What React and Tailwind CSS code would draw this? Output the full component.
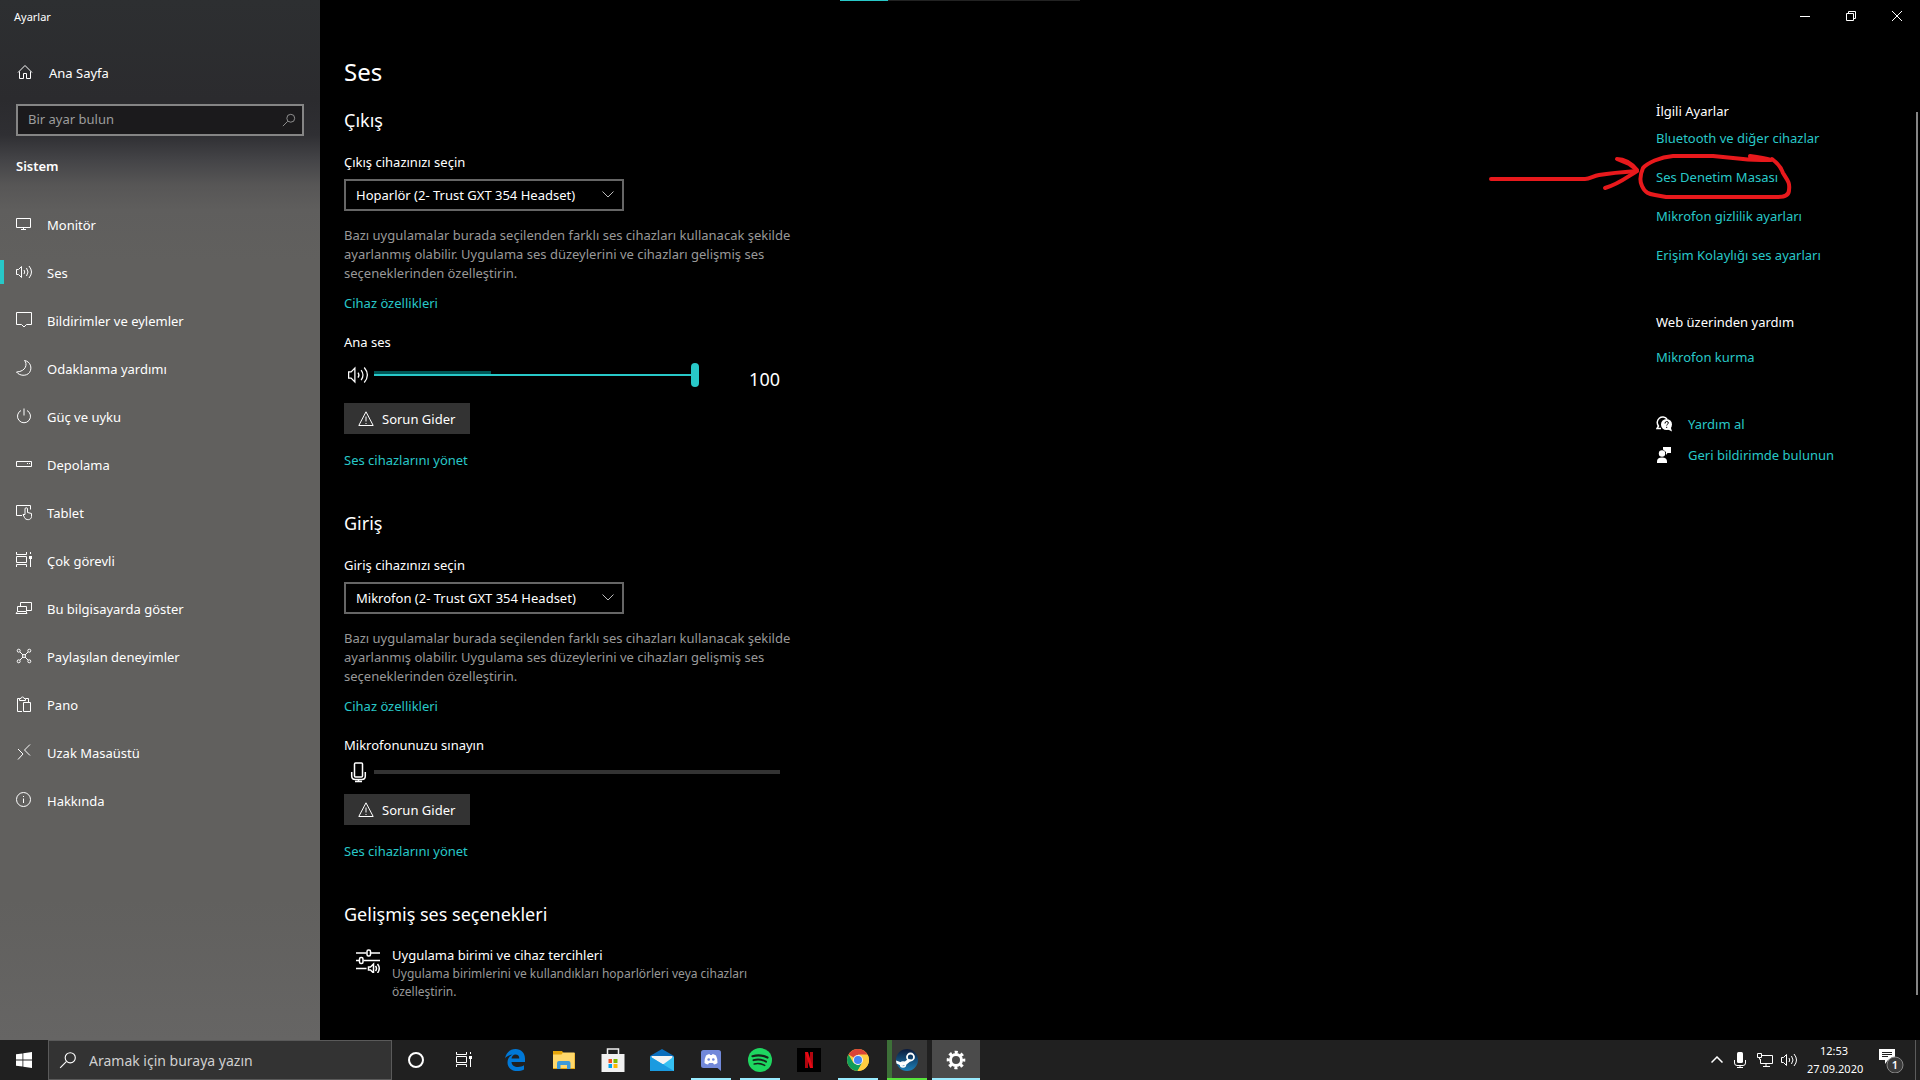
import React, { useState } from "react";

const NAV_ITEMS = [
  { id: "monitor", label: "Monitör" },
  { id: "sound", label: "Ses" },
  { id: "notifications", label: "Bildirimler ve eylemler" },
  { id: "focus", label: "Odaklanma yardımı" },
  { id: "power", label: "Güç ve uyku" },
  { id: "storage", label: "Depolama" },
  { id: "tablet", label: "Tablet" },
  { id: "multitask", label: "Çok görevli" },
  { id: "project", label: "Bu bilgisayarda göster" },
  { id: "shared", label: "Paylaşılan deneyimler" },
  { id: "clipboard", label: "Pano" },
  { id: "remote", label: "Uzak Masaüstü" },
  { id: "about", label: "Hakkında" },
];

// 16x16 line icons
const ICONS = {
  home: <path d="M1 8.5 8 1.5l7 7M2.5 7.5v7h4v-5h3v5h4v-7" />,
  monitor: <path d="M.5 2.5h14v9H.5zM7.5 11.5v2M5 13.500h5" />,
  sound: (
    <path d="M.5 5.5h2l3-3v11l-3-3h-2zM8 6q1.500 2 0 4M10.500 4q3 4 0 8M13 2q5 6 0 12" />
  ),
  notifications: <path d="M.5 .5h15v12h-5L8 15l-2.500-2.500h-5z" />,
  focus: (
    <path d="M8.500 .5c3 3 2 11-8 11.500 3 4 10 4.500 13 .5 3-4.500 1-11-5-12z" />
  ),
  power: <path d="M8 .5v7M5 2.500a6.500 6.500 0 1 0 6 0" />,
  storage: <path d="M.5 5.500h15v5H.5zM11 7.500h1M13 7.500h1" />,
  tablet: (
    <path d="M6 11.500H.5v-10h14v4M9 10.500V5a1 1 0 0 1 2.500 0v3.500l4 1v3c0 4-6 4-7 1l-1.500-3z" />
  ),
  multitask: (
    <>
      <path d="M.5 0v2.500h10V0M.5 4.500h10v6H.5zM.5 15v-2.500h10V15M14.500 0v2M14.500 7v8" />
      <path d="M13 4h3v3h-3z" fill="currentColor" stroke="none" />
    </>
  ),
  project: <path d="M4.500 6V2.500h11v8h-5M1.500 11.500v-5h9v5M0 13.500h11l-1-2H1.500z" />,
  shared: (
    <>
      <path d="m4 4 3 3M12 4 9 7M4 12l3-3M12 12 9 9" />
      <circle cx="2.700" cy="2.700" r="1.500" />
      <circle cx="13.300" cy="2.700" r="1.500" />
      <circle cx="2.700" cy="13.300" r="1.500" />
      <circle cx="13.300" cy="13.300" r="1.500" />
      <circle cx="8" cy="8" r="1.500" />
    </>
  ),
  clipboard: (
    <path d="M6 15.500H1.500v-13h2M10 2.500h2.500V6M3.500 2.500v2h6v-2H8a1.500 1.500 0 0 0-3 0zM7.500 6.500h7v9h-7z" />
  ),
  remote: <path d="m2 5 5 5-5 5.500M14 .5 8.500 6l5.500 5.500" />,
  about: (
    <>
      <circle cx="7.500" cy="7.500" r="7" />
      <path d="M7.500 6.500V11M7.500 4v1" />
    </>
  ),
  search: (
    <>
      <circle cx="10" cy="6" r="4.500" />
      <path d="M6.500 9.500 1 15" />
    </>
  ),
  warning: <path d="M8 .8 15.200 14.500H.8zM8 5.500v5M8 12v1" />,
};

function Icon({ name, size = 16, className = "" }) {
  return (
    <svg
      width={size}
      height={size}
      viewBox="0 0 16 16"
      fill="none"
      stroke="currentColor"
      strokeWidth="1"
      aria-hidden="true"
      className={`shrink-0 overflow-visible ${className}`}
    >
      {ICONS[name]}
    </svg>
  );
}

function Link({ children, className = "" }) {
  return (
    <a
      href="#"
      className={`block w-fit text-[13px] leading-5 text-[#28c8c8] hover:text-gray-400 ${className}`}
    >
      {children}
    </a>
  );
}

function Sidebar({ active, onSelect }) {
  return (
    <aside className="flex w-80 shrink-0 flex-col bg-linear-[180deg,#2d2f31_0px,#2b2b2e_100px,#2f2f33_135px,#444447_160px,#575656_185px,#5f5e5d_210px,#61605e_260px,#61605e_900px,#666564_1040px]">
      <div className="flex h-8 items-center px-3.5 pt-0.5 text-[11px]">Ayarlar</div>
      <a href="#" className="mt-4 flex h-12 items-center gap-4 px-[17px] text-[13px]">
        <Icon name="home" />
        <span className="pt-1">Ana Sayfa</span>
      </a>
      <label className="mx-4 mt-2 flex h-8 items-center border-2 border-[#858585] bg-[#1b1a1c] pr-1.5 pl-2.5 text-[#9d9d9d]">
        <input
          type="text"
          aria-label="Bir ayar bulun"
          placeholder="Bir ayar bulun"
          className="h-full min-w-0 flex-1 bg-transparent pb-0.5 text-[13px] leading-5 outline-none placeholder:text-[#9d9d9d]"
        />
        <Icon name="search" size={14} />
      </label>
      <h2 className="mt-5 px-4 text-[13px] leading-5 font-semibold">Sistem</h2>
      <nav className="mt-6">
        {NAV_ITEMS.map((item) => (
          <button
            key={item.id}
            type="button"
            onClick={() => onSelect(item.id)}
            className="flex h-12 w-full items-center text-left text-[13px] hover:bg-white/10"
          >
            <span
              className={
                item.id === active ? "h-6 w-1 bg-[#28c8c8]" : "h-6 w-1"
              }
            />
            <Icon name={item.id} className="mr-[15px] ml-3" />
            <span className="pt-1">{item.label}</span>
          </button>
        ))}
      </nav>
    </aside>
  );
}

function DeviceSelect({ id, label, device }) {
  return (
    <>
      <label htmlFor={id} className="mt-[18px] block text-[13px] leading-5">
        {label}
      </label>
      <div className="relative mt-[7px] w-[280px]">
        <select
          id={id}
          className="h-8 w-full appearance-none border-2 border-[#666666] bg-black pt-0.5 pr-9 pl-2.5 text-[13px] text-white outline-none"
        >
          <option>{device}</option>
        </select>
        <svg
          width="12"
          height="7"
          viewBox="0 0 12 7"
          fill="none"
          stroke="#bbbbbb"
          className="pointer-events-none absolute top-3 right-2.5"
        >
          <path d="m.5.5 5.500 5.500L11.500.5" />
        </svg>
      </div>
      <p className="mt-[15px] text-[13px] leading-[19px] text-[#999999]">
        Bazı uygulamalar burada seçilenden farklı ses cihazları kullanacak
        şekilde ayarlanmış olabilir. Uygulama ses düzeylerini ve cihazları
        gelişmiş ses seçeneklerinden özelleştirin.
      </p>
      <Link className="mt-2.5">Cihaz özellikleri</Link>
    </>
  );
}

function Troubleshoot({ className = "" }) {
  return (
    <>
      <button
        type="button"
        className={`flex h-[31px] w-[126px] items-center bg-[#333333] pl-3.5 text-[13px] whitespace-nowrap hover:bg-[#444444] ${className}`}
      >
        <Icon name="warning" className="mr-2" />
        <span className="pt-0.5">Sorun Gider</span>
      </button>
      <Link className="mt-4">Ses cihazlarını yönet</Link>
    </>
  );
}

function Volume() {
  const [volume, setVolume] = useState(100);

  return (
    <>
      <label htmlFor="volume" className="mt-[19px] block text-[13px] leading-5">
        Ana ses
      </label>
      <div className="mt-[11px] flex h-7">
        <div className="flex h-6 w-[30px] items-center pl-1">
          <Icon name="sound" size={20} />
        </div>
        <div className="relative h-6 w-[325px]">
          <div className="absolute top-2 left-0 h-[3px] w-[117px] bg-[#005555]" />
          <input
            id="volume"
            type="range"
            min="0"
            max="100"
            value={volume}
            onChange={(e) => setVolume(Number(e.target.value))}
            className="relative block h-6 w-full appearance-none bg-transparent [&::-webkit-slider-runnable-track]:h-0.5 [&::-webkit-slider-runnable-track]:bg-[#28c8c8] [&::-webkit-slider-thumb]:-mt-[11px] [&::-webkit-slider-thumb]:h-6 [&::-webkit-slider-thumb]:w-2 [&::-webkit-slider-thumb]:appearance-none [&::-webkit-slider-thumb]:rounded-full [&::-webkit-slider-thumb]:bg-[#28c8c8]"
          />
        </div>
        <output
          htmlFor="volume"
          className="flex-1 self-end pr-6 text-right text-lg leading-6"
        >
          {volume}
        </output>
      </div>
    </>
  );
}

function SoundPage() {
  return (
    <main className="w-[460px] pb-6">
      <h1 className="text-2xl leading-9">Ses</h1>

      <section>
        <h2 className="mt-4 text-lg leading-7">Çıkış</h2>
        <DeviceSelect
          id="output-device"
          label="Çıkış cihazınızı seçin"
          device="Hoparlör (2- Trust GXT 354 Headset)"
        />
        <Volume />
        <Troubleshoot className="mt-3" />
      </section>

      <section>
        <h2 className="mt-[39px] text-lg leading-7">Giriş</h2>
        <DeviceSelect
          id="input-device"
          label="Giriş cihazınızı seçin"
          device="Mikrofon (2- Trust GXT 354 Headset)"
        />
        <h3 className="mt-[19px] text-[13px] leading-5">Mikrofonunuzu sınayın</h3>
        <div className="mt-[5px] flex h-6 items-center">
          <svg
            width="30"
            height="24"
            viewBox="0 0 30 24"
            fill="none"
            stroke="currentColor"
            strokeWidth="1.500"
          >
            <rect x="10.500" y="3" width="8" height="14" rx="1" />
            <path d="M7.700 12v4q0 3.500 3.500 3.500h6.600q3.500 0 3.500-3.500v-4M14.500 19.500v2.500M11 21.500h7" />
          </svg>
          <div className="mr-6 h-1 flex-1 bg-[#333333]" />
        </div>
        <Troubleshoot className="mt-2.5" />
      </section>

      <section>
        <h2 className="mt-[39px] text-lg leading-7">Gelişmiş ses seçenekleri</h2>
        <button type="button" className="mt-[18px] flex text-left">
          <svg
            width="24"
            height="24"
            viewBox="0 0 24 24"
            fill="none"
            stroke="currentColor"
            strokeWidth="1.500"
            className="mt-[3px] mr-3 ml-3 shrink-0"
          >
            <path d="M0 4h10.500M15 4h9M0 11.500h3M7.500 11.500H24M0 19.500h10.500" />
            <rect x="11" y="1" width="3.500" height="6" rx="1.500" />
            <rect x="3.500" y="8.500" width="3.500" height="6" rx="1.500" />
            <path d="M12.500 18h2l3-3v9l-3-3h-2z" />
            <path d="M19.500 17q2 2.500 0 5M21.500 15q3.500 4.500 0 9" />
          </svg>
          <span>
            <span className="block text-[13px] leading-[19px]">
              Uygulama birimi ve cihaz tercihleri
            </span>
            <span className="block text-xs leading-[18px] text-[#999999]">
              Uygulama birimlerini ve kullandıkları hoparlörleri veya cihazları
              özelleştirin.
            </span>
          </span>
        </button>
      </section>
    </main>
  );
}

// Red marker drawn over the sound control panel link
function Marker() {
  return (
    <svg
      width="306"
      height="54"
      viewBox="0 0 306 54"
      fill="none"
      stroke="#e8191c"
      strokeWidth="4"
      strokeLinecap="round"
      strokeLinejoin="round"
      className="pointer-events-none absolute -top-[15px] -left-[170px]"
    >
      <path d="M5 27h94c5 0 8-3 14-4 12-2 24-3 38-4" />
      <path d="M119 36c14-4 22-11 32-17" />
      <path d="M131 7c9 0 15 5 20 11l-8-6z" />
      <path d="M264 4c8 1 15 2 21 4-12 0-20 0-28-1-10-1-20-2-30-3h-40c-13 1-26 7-30 12-3 7-3 14-1 18 3 7 7 8 13 9l11 2h112c7 0 11-2 11-7 1-7-1-9-6-17-2-6-7-11-11-14" />
    </svg>
  );
}

function RelatedLinks() {
  return (
    <aside className="w-[264px] shrink-0 pt-[47px] text-[13px]">
      <h2 className="leading-5">İlgili Ayarlar</h2>
      <Link className="mt-[7px]">Bluetooth ve diğer cihazlar</Link>
      <div className="relative mt-[19px]">
        <Link>Ses Denetim Masası</Link>
        <Marker />
      </div>
      <Link className="mt-[19px]">Mikrofon gizlilik ayarları</Link>
      <Link className="mt-[19px]">Erişim Kolaylığı ses ayarları</Link>
      <h2 className="mt-[47px] leading-5">Web üzerinden yardım</h2>
      <Link className="mt-[15px]">Mikrofon kurma</Link>
      <div className="mt-[47px] flex gap-4">
        <svg width="16" height="16" viewBox="0 0 16 16" className="mt-0.5">
          <path
            d="M5 12.500 1 12.500l1.500-2.500A5.500 5.500 0 1 1 11 3"
            fill="none"
            stroke="#fff"
            strokeWidth="1.500"
          />
          <circle cx="10.500" cy="8.500" r="5.500" fill="#fff" />
          <path d="m11 13 5 2.500-1.500-5z" fill="#fff" />
          <path
            d="M9 7.500q0-2 1.700-2t1.700 1.500c0 1-1.700 1.200-1.700 2.500M10.700 10.800v1.200"
            fill="none"
            stroke="#000"
          />
        </svg>
        <Link>Yardım al</Link>
      </div>
      <div className="mt-[11px] flex gap-4">
        <svg width="16" height="16" viewBox="0 0 16 16" fill="#fff" className="mt-0.5">
          <circle cx="6" cy="6.500" r="3.200" />
          <path d="M1 16v-1.500q0-4 5-4t5 4V16z" />
          <path d="M7 0h8v6h-3.500L10 8V5L7 2.500z" />
        </svg>
        <Link>Geri bildirimde bulunun</Link>
      </div>
    </aside>
  );
}

function WindowControls() {
  return (
    <div className="flex h-8 justify-end">
      <button type="button" aria-label="Simge durumuna küçült" className="grid w-[46px] place-items-center">
        <svg width="10" height="10" stroke="#fff">
          <path d="M0 5.500h10" />
        </svg>
      </button>
      <button type="button" aria-label="Geri yükle" className="grid w-[46px] place-items-center">
        <svg width="10" height="10" fill="none" stroke="#fff">
          <path d="M.5 2.500h7v7h-7zM2.500 2.500v-2h7v7h-2" />
        </svg>
      </button>
      <button type="button" aria-label="Kapat" className="grid w-[46px] place-items-center">
        <svg width="10" height="10" stroke="#fff">
          <path d="m0 0 10 10M10 0 0 10" />
        </svg>
      </button>
    </div>
  );
}

function EdgeIcon() {
  return (
    <svg width="22" height="22" viewBox="0 0 22 22" fill="#0078d7">
      <path d="M1 9.500C2 3.500 6.500 0 11.500 0 17 0 21 4 21 9.500V13H7.500c0 3 3 5 6.500 5 2.500 0 4.500-.7 6-1.700v4.200c-2 1-4.200 1.500-7 1.500-5.500 0-9.500-3.500-9.500-8.500 0-3.500 2-6.500 5-8-3.500.5-6 2-7.500 4zM7.500 9.500h7.800c0-2.500-1.300-4-3.800-4-2.300 0-3.700 1.700-4 4z" />
    </svg>
  );
}

function ExplorerIcon() {
  return (
    <svg width="22" height="18" viewBox="0 0 22 18">
      <path d="M0 0h9l1.500 2H22v16H0z" fill="#e5a50a" />
      <path d="M0 3.500h8.500L10 1.500h11.500V17H0z" fill="#ffd86b" />
      <path d="M4 18v-6q0-2 2-2h9.500q2 0 2 2v6H14v-4H7.500v4z" fill="#3c9ad8" />
    </svg>
  );
}

function StoreIcon() {
  return (
    <svg width="24" height="24" viewBox="0 0 24 24">
      <path d="M6.500 6V1h11v5" fill="none" stroke="#eee" strokeWidth="1.500" />
      <path d="M.5 6h23v18H.5z" fill="#f1f1f1" />
      <path d="M7.500 11H11v4H7.500z" fill="#f25022" />
      <path d="M12.500 11h4v4h-4z" fill="#7fba00" />
      <path d="M7.500 16H11v4H7.500z" fill="#00a4ef" />
      <path d="M12.500 16h4v4h-4z" fill="#ffb900" />
    </svg>
  );
}

function MailIcon() {
  return (
    <svg width="24" height="24" viewBox="0 0 24 24">
      <path d="M0 8 12 1l12 7v14H0z" fill="#0a6ebd" />
      <path d="M1.500 8h21v8h-21z" fill="#f4f4f4" />
      <path d="M0 8.500 13 16.500 24 8.500V23H0z" fill="#35c0f2" />
      <path d="M0 8.500 24 23H0z" fill="#1a9be0" />
    </svg>
  );
}

function DiscordIcon() {
  return (
    <svg width="20" height="21" viewBox="0 0 20 21">
      <path d="M2.500 0h15Q20 0 20 2.500V21l-3.500-3h-14Q0 18 0 15.500v-13Q0 0 2.500 0z" fill="#7289da" />
      <path d="M5 5.500q2-1.500 3.500-1.500l.5 1h2l.5-1q1.500 0 3.500 1.500 2 4 1.500 7.500-1.500 1.300-3.500 1.500l-1-1.500H8l-1 1.500q-2-.2-3.500-1.500Q3 9.500 5 5.500z" fill="#fff" />
      <circle cx="7.700" cy="9.500" r="1.300" fill="#7289da" />
      <circle cx="12.300" cy="9.500" r="1.300" fill="#7289da" />
    </svg>
  );
}

function SpotifyIcon() {
  return (
    <svg width="24" height="24" viewBox="0 0 24 24" fill="none" stroke="#15251a" strokeLinecap="round">
      <circle cx="12" cy="12" r="12" fill="#1ed760" stroke="none" />
      <path d="M4.500 8.200Q12.500 6 19.500 9.500" strokeWidth="2.200" />
      <path d="M5.500 12.200q6.500-1.800 12.500 1.500" strokeWidth="1.900" />
      <path d="M6.200 16q5.500-1.400 10.500 1.400" strokeWidth="1.500" />
    </svg>
  );
}

function NetflixIcon() {
  return (
    <svg width="24" height="24" viewBox="0 0 24 24">
      <path d="M0 0h24v24H0z" fill="#000" />
      <path d="M8 4h3v16H8zM13 4h3v16h-3z" fill="#b1060f" />
      <path d="M8 4h3l5 16h-3z" fill="#e50914" />
    </svg>
  );
}

function ChromeIcon() {
  return (
    <svg width="22" height="22" viewBox="0 0 22 22">
      <circle cx="11" cy="11" r="11" fill="#ffcd40" />
      <path d="M11 11 1.500 5.500A11 11 0 0 1 20.500 5.500H11z" fill="#db4437" />
      <path d="M1.500 5.500A11 11 0 0 0 10.500 22l5-8.500L11 16 6.300 13.800z" fill="#0f9d58" />
      <path d="M11 6h9.800A11 11 0 0 1 10.500 22l4.800-8.500z" fill="#ffcd40" />
      <circle cx="11" cy="11" r="5" fill="#f1f1f1" />
      <circle cx="11" cy="11" r="4" fill="#4285f4" />
    </svg>
  );
}

function SteamIcon() {
  return (
    <svg width="22" height="22" viewBox="0 0 22 22">
      <defs>
        <linearGradient id="steam" x1="0" y1="0" x2="0" y2="1">
          <stop offset="0" stopColor="#0b1a3b" />
          <stop offset="1" stopColor="#1b7fb8" />
        </linearGradient>
      </defs>
      <circle cx="11" cy="11" r="11" fill="url(#steam)" />
      <path d="M0 11.500 7 14l5-4 4 1-5.500 4.500L6 17 .5 14.500z" fill="#fff" />
      <circle cx="14.500" cy="8" r="3.500" fill="none" stroke="#fff" strokeWidth="1.800" />
      <circle cx="7" cy="15.500" r="2.500" fill="none" stroke="#fff" strokeWidth="1.500" />
    </svg>
  );
}

function SettingsIcon() {
  return (
    <svg width="20" height="20" viewBox="0 0 20 20" fill="none" stroke="#fff">
      <circle cx="10" cy="10" r="5.500" strokeWidth="3" />
      <circle cx="10" cy="10" r="7.800" strokeWidth="3" strokeDasharray="3.100 3.026" strokeDashoffset="1.550" />
    </svg>
  );
}

const APPS = [
  { name: "Microsoft Edge", icon: <EdgeIcon /> },
  { name: "Dosya Gezgini", icon: <ExplorerIcon /> },
  { name: "Microsoft Store", icon: <StoreIcon /> },
  { name: "Posta", icon: <MailIcon /> },
  { name: "Discord", icon: <DiscordIcon />, state: "open" },
  { name: "Spotify", icon: <SpotifyIcon />, state: "open" },
  { name: "Netflix", icon: <NetflixIcon /> },
  { name: "Google Chrome", icon: <ChromeIcon />, state: "open" },
  { name: "Steam", icon: <SteamIcon />, state: "progress" },
  { name: "Ayarlar", icon: <SettingsIcon />, state: "active" },
];

const APP_STATE = {
  open: "mx-1 w-10 border-[#99ebff]",
  progress:
    "mx-1 w-10 border-[#57e33b] bg-linear-[90deg,#3d7038_5px,#373737_5px]",
  active: "w-12 border-[#99ebff] bg-[#4b4b4b]",
};

function Taskbar() {
  return (
    <footer className="flex h-10 shrink-0 bg-[#202020]">
      <button type="button" aria-label="Başlat" className="grid w-12 place-items-center">
        <svg width="16" height="16" viewBox="0 0 16 16" fill="#fff">
          <path d="M0 2.300 6.500 1.400v6.200H0zM7.300 1.300 16 0v7.600H7.300zM0 8.400h6.500v6.200L0 13.700zM7.300 8.400H16V16l-8.700-1.300z" />
        </svg>
      </button>
      <label className="flex w-[344px] items-center gap-3 border border-[#5a5a5a] bg-[#333333] px-2.5">
        <Icon name="search" size={18} />
        <input
          type="text"
          aria-label="Aramak için buraya yazın"
          placeholder="Aramak için buraya yazın"
          className="h-full min-w-0 flex-1 bg-transparent text-sm leading-5 outline-none placeholder:text-[#d0d0d0]"
        />
      </label>
      <button type="button" aria-label="Cortana" className="grid w-12 place-items-center">
        <span className="size-4 rounded-full border-2 border-white" />
      </button>
      <button type="button" aria-label="Görev görünümü" className="mr-[3px] grid w-12 place-items-center">
        <Icon name="multitask" />
      </button>
      <div className="flex gap-px">
        {APPS.map((app) => (
          <button
            key={app.name}
            type="button"
            aria-label={app.name}
            className={`flex items-center justify-center border-b-2 pt-0.5 ${
              app.state ? APP_STATE[app.state] : "w-12 border-transparent"
            }`}
          >
            {app.icon}
          </button>
        ))}
      </div>
      <div className="ml-auto flex items-center">
        <svg width="12" height="8" fill="none" stroke="#fff" strokeWidth="1.500" className="mr-[11px]">
          <path d="m.5 6.500 5.500-5.500L11.500 6.500" />
        </svg>
        <svg width="12" height="16" fill="none" stroke="#fff" className="mr-[11px]">
          <rect x="3" y="0" width="6" height="11" rx="1.500" fill="#fff" stroke="none" />
          <path d="M.5 8v3q0 2.500 2.500 2.500h6q2.500 0 2.500-2.500V8M6 13.500v2M3 15.500h6" />
        </svg>
        <svg width="16" height="14" fill="none" stroke="#fff" className="mr-2">
          <path d="M5 2.500h10.500v8H3.500V6M9 10.500v3M6 13.500h7M.5.5h4v4h-4zM2.500 4.500v2" />
        </svg>
        <Icon name="sound" className="mr-2.5" />
        <time className="w-[54px] text-center text-[11px] leading-[18px] whitespace-nowrap">
          12:53
          <br />
          27.09.2020
        </time>
        <button type="button" aria-label="Bildirimler" className="relative ml-[18px]">
          <svg width="26" height="26" viewBox="0 0 26 26">
            <path d="M0 2h16v11H9l-3 4v-4H0z" fill="#fff" />
            <path d="M3 5.500h10M3 7.500h10M3 9.500h6" stroke="#202020" />
            <circle cx="16" cy="18" r="8" fill="#3a3a3a" stroke="#888888" />
          </svg>
          <span className="absolute top-2.5 left-2 w-4 text-center text-[11px] leading-4 font-semibold">
            1
          </span>
        </button>
        <div className="mr-1 ml-2.5 h-10 w-px bg-[#5c5c5c]" />
      </div>
    </footer>
  );
}

export default function App() {
  const [active, setActive] = useState("sound");

  return (
    <div className="flex min-h-screen flex-col bg-black font-['Noto_Sans','Open_Sans',sans-serif] text-white">
      <div className="flex flex-1">
        <Sidebar active={active} onSelect={setActive} />
        <div className="relative flex min-w-0 flex-1 flex-col">
          <div className="absolute top-0 left-[520px] flex h-px w-60">
            <div className="w-12 bg-[#28c8c8]" />
            <div className="flex-1 bg-[#222222]" />
          </div>
          <WindowControls />
          <div className="flex flex-1 justify-between pt-[22px] pl-6">
            <SoundPage />
            <RelatedLinks />
          </div>
          <div className="absolute top-28 right-0.5 bottom-[45px] w-0.5 bg-[#858585]" />
        </div>
      </div>
      <Taskbar />
    </div>
  );
}
